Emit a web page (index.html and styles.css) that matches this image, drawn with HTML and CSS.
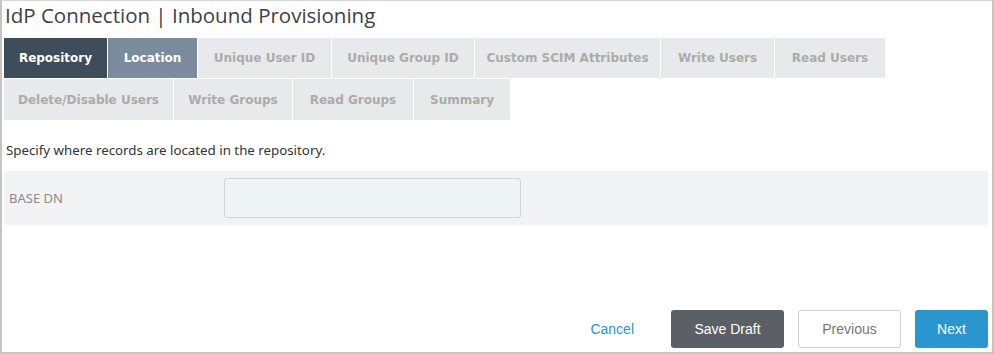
FILE: index.html
```html
<!DOCTYPE html>
<html>
<head>
<meta charset="utf-8">
<link rel="stylesheet" href="styles.css">
</head>
<body>
<div class="frame">
  <h1 class="title">IdP Connection | Inbound Provisioning</h1>
  <div class="tabs">
    <div class="tab-row">
      <div class="tab done t-repo">Repository</div>
      <div class="tab active t-loc">Location</div>
      <div class="tab t-uuid">Unique User ID</div>
      <div class="tab t-ugid">Unique Group ID</div>
      <div class="tab t-scim">Custom SCIM Attributes</div>
      <div class="tab t-wu">Write Users</div>
      <div class="tab t-ru">Read Users</div>
    </div>
    <div class="tab-row">
      <div class="tab t-del">Delete/Disable Users</div>
      <div class="tab t-wg">Write Groups</div>
      <div class="tab t-rg">Read Groups</div>
      <div class="tab t-sum">Summary</div>
    </div>
  </div>
  <p class="desc">Specify where records are located in the repository.</p>
  <div class="form-row">
    <label class="label">BASE DN</label>
    <input class="input" type="text">
  </div>
  <div class="spacer"></div>
  <div class="actions">
    <a class="cancel">Cancel</a>
    <button class="btn btn-save">Save Draft</button>
    <button class="btn btn-prev">Previous</button>
    <button class="btn btn-next">Next</button>
  </div>
</div>
</body>
</html>
```
FILE: styles.css
```css
* { box-sizing: border-box; }
html, body { margin: 0; padding: 0; background: #fff; }
body { width: 994px; height: 354px; overflow: hidden; font-family: "Liberation Sans", Arial, sans-serif; }
.frame {
  width: 994px; height: 354px;
  border: 2px solid #c4c4c4; border-top: 1px solid #d6d6d6;
  padding: 0 4px 4px 2px;
  display: flex; flex-direction: column;
}
.title {
  margin: 0; padding: 2px 0 0 1px;
  font-family: "Open Sans", "Liberation Sans", sans-serif;
  font-weight: 400; font-size: 20.5px; line-height: 24px; color: #3b4249;
  height: 37px;
}
.tabs { display: flex; flex-direction: column; gap: 1px; }
.tab-row { display: flex; gap: 1px; }
.tab {
  height: 40px; display: flex; align-items: center; justify-content: center;
  background: #e8e9ea; color: #ababab;
  font-family: "DejaVu Sans", sans-serif; font-weight: bold; font-size: 12px;
}
.tab.done { background: #3e4d5a; color: #fff; }
.tab.active { background: #7a8b9c; color: #fff; }
.t-repo { width: 103px; }
.t-loc { width: 89px; }
.t-uuid { width: 133px; }
.t-ugid { width: 142px; }
.t-scim { width: 185px; }
.t-wu { width: 113px; }
.t-ru { width: 110px; }
.t-del { width: 169px; height: 41px; }
.t-wg { width: 118px; height: 41px; }
.t-rg { width: 120px; height: 41px; }
.t-sum { width: 96px; height: 41px; }
.desc {
  margin: 22px 0 0 2px; font-size: 13.3px; line-height: 16px; color: #333;
  font-family: "Noto Sans", "Liberation Sans", sans-serif;
}
.form-row {
  margin-top: 13px; height: 54px; background: #f2f3f4;
  display: flex; align-items: center;
}
.label {
  width: 220px; padding-left: 5px; font-size: 13px; color: #8a8a8a;
  font-family: "Noto Sans", "Liberation Sans", sans-serif;
}
.input {
  width: 297px; height: 40px; background: #eef3f3;
  border: 1px solid #cfd4d6; border-radius: 3px; margin: 0;
}
.spacer { flex: 1; }
.actions { display: flex; justify-content: flex-end; align-items: center; gap: 14px; }
.cancel { color: #2a96d0; font-size: 14px; margin-right: 23px; }
.btn {
  height: 38px; border-radius: 3px; font-family: "Liberation Sans", Arial, sans-serif;
  font-size: 14px; border: 1px solid transparent; padding: 0; margin: 0;
}
.btn-save { width: 113px; background: #5a6066; color: #fff; }
.btn-prev { width: 103px; background: #fff; border-color: #cfcfcf; color: #777; }
.btn-next { width: 73px; background: #2a96d0; color: #fff; }
```
